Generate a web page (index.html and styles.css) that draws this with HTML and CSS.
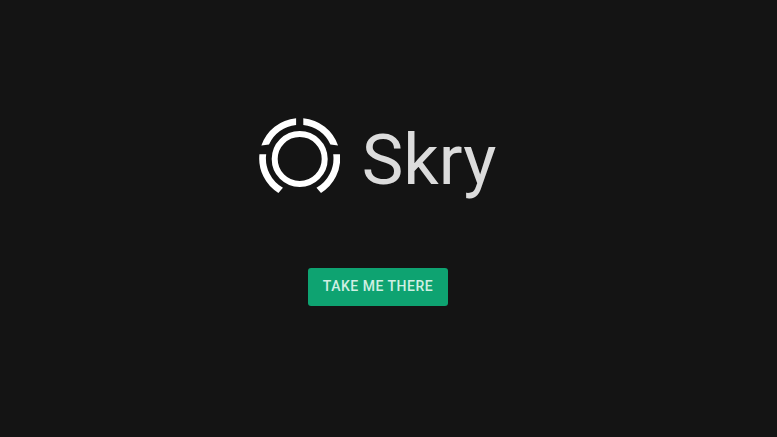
FILE: index.html
```html
<!DOCTYPE html>
<html lang="en">
<head>
    <meta charset="UTF-8">
    <title>Skry</title>
    <link rel="stylesheet" href="styles.css">
</head>
<body>
    <div class="page_container">
        <div class="logo_container">
            <svg class="logo_icon" width="82" height="82" viewBox="-0.7 -0.5 82 82">
                <circle cx="41" cy="41.5" r="25" fill="none" stroke="#ffffff" stroke-width="6"/>
                <g fill="#ffffff">
                    <path d="M44.6 .66 A40.5 40.5 0 0 1 79.36 28 L71.7 27 A33.8 33.8 0 0 0 44.6 7.4Z"/>
                    <path d="M37.4 .66 A40.5 40.5 0 0 0 2.64 28 L10.3 27 A33.8 33.8 0 0 1 37.4 7.4Z"/>
                    <path d="M81.27 36.7 A40.5 40.5 0 0 1 62.3 75.4 L57.75 70.35 A33.8 33.8 0 0 0 74.5 36.7Z"/>
                    <path d="M.73 36.7 A40.5 40.5 0 0 0 19.7 75.4 L24.25 70.35 A33.8 33.8 0 0 1 7.5 36.7Z"/>
                </g>
            </svg>
            <span class="logo_text">Skry</span>
        </div>
        <button class="buttons" id="btn_go">TAKE ME THERE</button>
    </div>
</body>
</html>
```

FILE: styles.css
```css
html, body {
    height: 100%;
}

body {
    margin: 0;
    background-color: #141414;
    font-family: "Roboto", sans-serif;
}

.page_container {
    display: flex;
    flex-direction: column;
    align-items: center;
    width: 756px;
    padding-top: 117px;
}

.logo_container {
    display: flex;
    flex-direction: row;
    align-items: center;
    gap: 22px;
    height: 82px;
    margin-right: 2px;
}

.logo_text {
    padding-top: 3px;
    font-size: 70px;
    font-weight: 400;
    line-height: 82px;
    color: #dcdcdc;
}

.buttons {
    width: 140px;
    height: 38px;
    margin-top: 69px;
    padding: 0 0 2px;
    border: none;
    border-radius: 3px;
    background-color: #0ea371;
    color: #d0efe3;
    font-family: "Roboto", sans-serif;
    font-size: 14px;
    font-weight: 500;
    letter-spacing: 0.5px;
}
```
